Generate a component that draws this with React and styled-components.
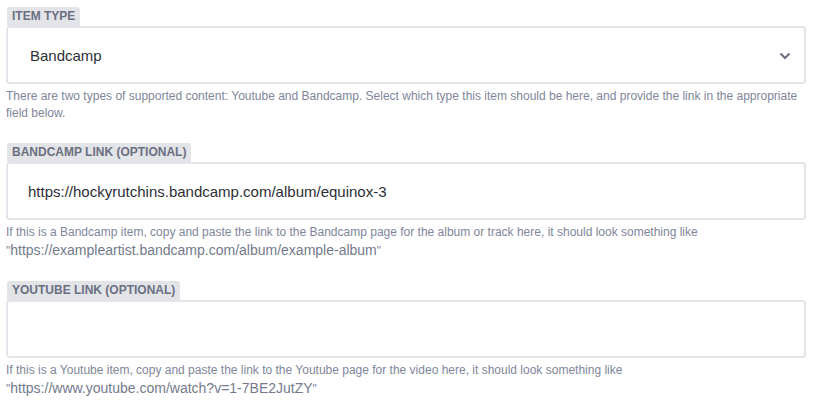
import React from 'react'
import styled, { createGlobalStyle } from 'styled-components'

const GlobalStyle = createGlobalStyle`
  body {
    margin: 0;
    background: #fff;
    font-family: 'Liberation Sans', Arial, sans-serif;
  }`

const Page = styled.div`
  padding: 7px 8px 0 6px;
  display: flex;
  flex-direction: column;
  gap: 21px;`

const Field = styled.div`
  display: flex;
  flex-direction: column;
  align-items: flex-start;`

const Tab = styled.label`
  display: inline-block;
  margin-left: 1px;
  padding: 0 5px;
  height: 19px;
  line-height: 19px;
  background: #e3e4e8;
  border-radius: 3px 3px 0 0;
  font-size: 12px;
  font-weight: bold;
  text-transform: uppercase;
  color: #6b7081;`

const Box = styled.div`
  position: relative;
  box-sizing: border-box;
  width: 100%;
  height: 58px;
  border: 2px solid #e4e5ea;
  border-radius: 4px;
  display: flex;
  align-items: center;
  padding: 0 20px;
  font-size: 15px;
  color: #2d2f36;`

const Value = styled.span`
  padding-left: ${p => p.$indent || 0}px;`

const Chevron = styled.svg`
  position: absolute;
  right: 13px;
  top: 50%;
  margin-top: -3px;`

const Help = styled.p`
  margin: 4px 0 0;
  font-size: 12px;
  line-height: 17px;
  color: #80869a;`

const Url = styled.span`
  font-size: 14px;
  line-height: 18px;
  color: #737a8c;`

const Example = ({ url }) => <>
  <br />"<Url>{url}</Url>"
</>

const App = () => <Page>
  <GlobalStyle />
  <Field>
    <Tab>Item type</Tab>
    <Box>
      <Value $indent={2}>Bandcamp</Value>
      <Chevron width="12" height="8" viewBox="0 0 12 8">
        <path d="M1.5 1.5 L6 6 L10.5 1.5" fill="none" stroke="#6b7081" strokeWidth="2" />
      </Chevron>
    </Box>
    <Help>
      There are two types of supported content: Youtube and Bandcamp. Select which type this item should be here, and provide the link in the appropriate field below.
    </Help>
  </Field>
  <Field>
    <Tab>Bandcamp link (optional)</Tab>
    <Box>
      <Value>https://hockyrutchins.bandcamp.com/album/equinox-3</Value>
    </Box>
    <Help>
      If this is a Bandcamp item, copy and paste the link to the Bandcamp page for the album or track here, it should look something like
      <Example url="https://exampleartist.bandcamp.com/album/example-album" />
    </Help>
  </Field>
  <Field>
    <Tab>Youtube link (optional)</Tab>
    <Box />
    <Help>
      If this is a Youtube item, copy and paste the link to the Youtube page for the video here, it should look something like
      <Example url="https://www.youtube.com/watch?v=1-7BE2JutZY" />
    </Help>
  </Field>
</Page>

export default App
